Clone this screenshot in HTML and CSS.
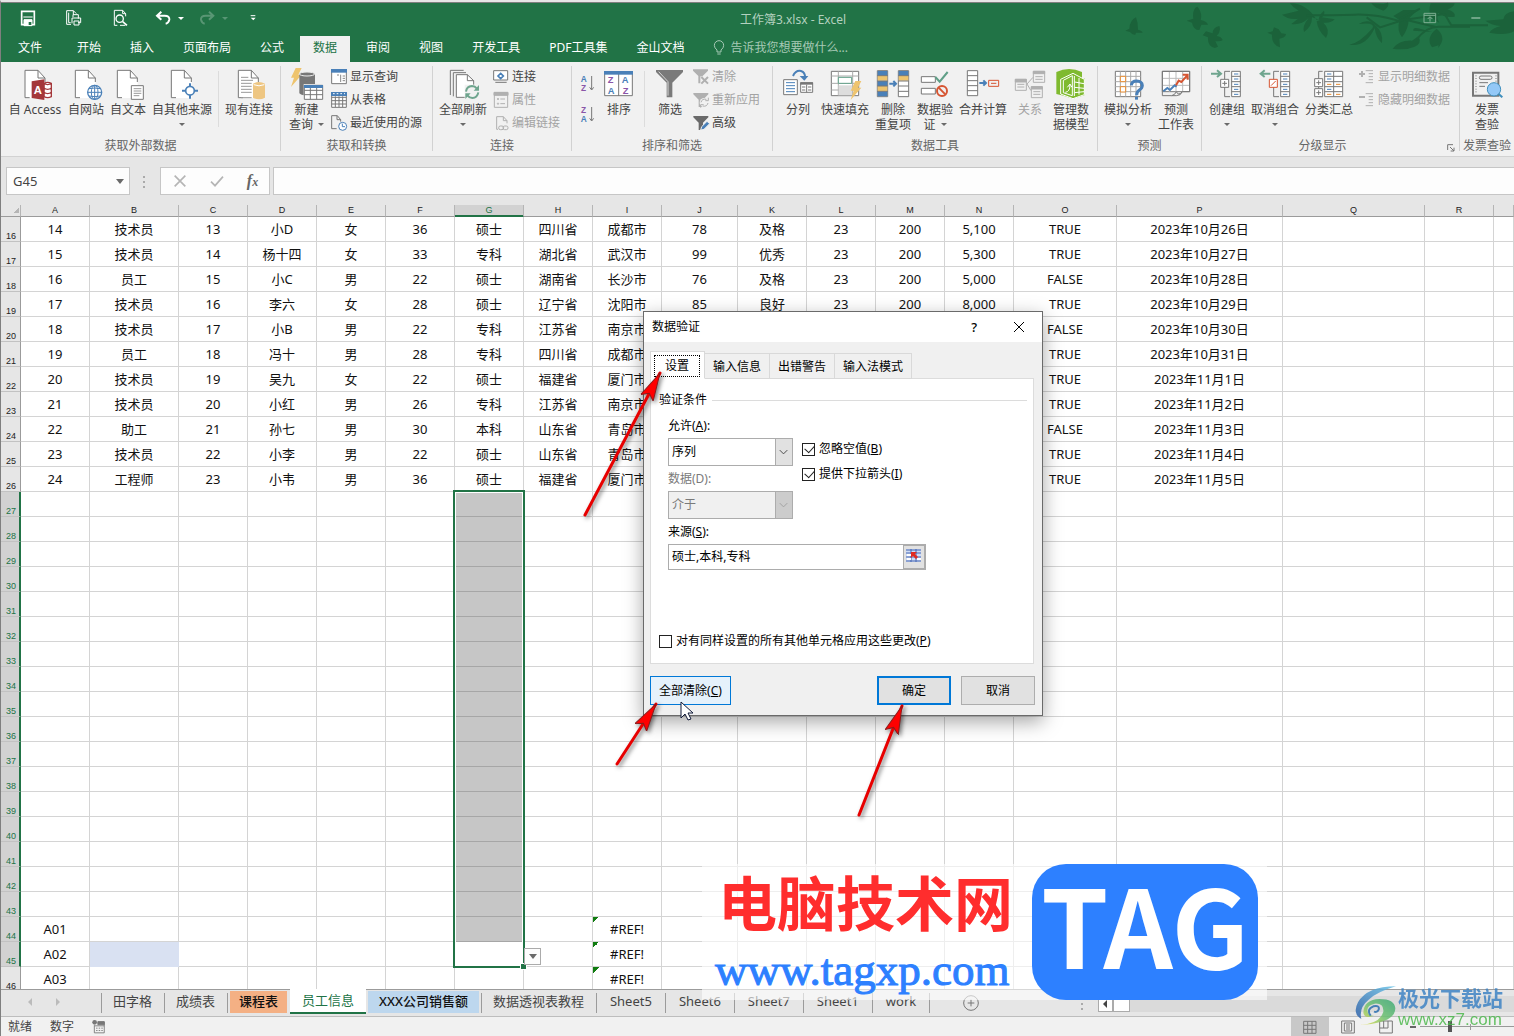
FILE: index.html
```html
<!DOCTYPE html>
<html lang="zh-CN">
<head>
    <meta charset="UTF-8" />
    <meta name="viewport" content="width=device-width, initial-scale=1" />
    <title>工作簿3.xlsx - Excel</title>
    <link rel="stylesheet" href="styles.css">
</head>
<body>
    <svg class="defs" width="0" height="0" aria-hidden="true">
        <symbol id="page" overflow="visible"><path d="M1 0h39l22 24v60H1z" fill="#fff" stroke="none"/><path d="M15 83H1V1h39l21 23v12M40 1v23h21" /></symbol>
        <symbol id="bolt" overflow="visible"><path d="M14 0h18L22 20h10L0 57l9-28H0z" fill="#eec46e" stroke="none"/></symbol>
        <symbol id="funnel" overflow="visible"><path d="M0 0h45v4L29 20v22H16V20L0 4z" stroke="none"/></symbol>
    </svg>

    <div class="window">
        <header class="titlebar">
            <svg class="foliage" viewBox="0 9 1182 177" aria-hidden="true">
                <path d="M48 52q-18 8-20 34l-12 6 14 4q8 10 16 8l2-6 20 0q-2-6-14-9 0-22-6-37zM232 20q-16 6-12 36l-20 6 16 6q4 22 22 22l6-16 20 0q-4-10-22-14 6-22-10-40zM298 78q-20 4-20 22l-20-6q-8 10-10 12l16 6q-2 26 20 32l10-4-8-16q20 0 22-4-4-10-18-12 14-14 8-30zM462 82l-4 12-16 4 14 6q-2 30 24 38l-2-26q18-2 20-14l-14-2-8-12z"/>
                <path d="M590 60Q560 10 510 10q10 14 26 22l-50 12q20 16 48 12l-20 16q30 4 52-18-20 24-14 42 24-16 24-44l24 8-10 4q4 30 28 50 14-26-8-46 24 2 34-10l-38-6q10-10 6-20-14 12-16 26zM716 72q50-6 42 12-40 46-70 50 50 8 76-50 4 30 22 46 4-34-18-52l-14-12q-20-6-38 6zM820 48l30-18h46q-20 14-30 26 0 30-20 56-16-20-8-52zM790 12l-36-2q10 14 36 22 20-14 14-24zM932 10h72q-2 12-22 18 26 8 22 22-30 4-50-12-6 16 4 30-40-16-26-58zM1182 34q-30 4-32 24l-54 4q20 14 46 16-26 6-34 20 50 10 74-4zM818 146q20-26 58-24l20-14q10 24-12 32-28 12-66 6zM950 86q-34 26-14 56l20-6-2 8q26-30 0-54zM900 86q-22-6-20 6l56 4z"/>
                <path class="twig" d="M560 46q80 0 144-2t130 18l140-20 20 34h110M740 52l40 30 70-22M890 118q30-40 70-38l90 0M840 56l60-30M860 60l90 22"/>
            </svg>
            <div class="quick">
                <button aria-label="保存"><svg class="ico w20" viewBox="54 24 60 60"><path d="M65 34h38v40H65z" stroke="#fff" stroke-width="5"/><path d="M70 51h28M72 59h24v18H72z" stroke="#fff" fill="#fff"/><path d="M86 66h8v9h-8z" fill="#217346" stroke="none"/></svg></button>
                <button aria-label="快速打印"><svg class="ico w20 light" viewBox="192 24 60 60"><path d="M213 73h-13V32h20l9 9M206 38v30h6M220 32v12M219 51v-7h16v12M216 70v-16h26v14h-8M222 63h15v12h-15z"/></svg></button>
                <button aria-label="打印预览"><svg class="ico w20 light" viewBox="330 24 60 60"><path d="M352 76h-9V31h25l9 10v8M368 31v10h9M360 76h16"/><circle cx="359" cy="56" r="11" stroke-width="4"/><path d="M368 65l13 11" stroke-width="5"/></svg></button>
                <button aria-label="撤消"><svg class="ico w20 light bold" viewBox="459 24 60 60"><path d="M484 35l-13 12 13 12M472 47h22q15 0 14 12-2 10-11 12"/></svg></button>
                <i class="caret"></i>
                <button class="dim" aria-label="恢复"><svg class="ico w20 light bold" viewBox="591 24 60 60"><path d="M627 35l13 12-13 12M639 47h-22q-15 0-14 12 2 10 11 12"/></svg></button>
                <i class="caret dim"></i>
                <button class="customize" aria-label="自定义快速访问工具栏"><svg class="ico w10 light" viewBox="746 39 30 30"><path d="M754 47h14"/><path d="M754 53h15l-7 8z" fill="#fff" stroke="none"/></svg></button>
            </div>
            <div class="caption">工作簿3.xlsx - Excel</div>
            <div class="winbuttons">
                <button aria-label="功能区显示选项"><svg class="ico w20" viewBox="902 24 60 60"><path d="M914 40h35v28h-35zM914 46h35M932 65v-14M925 57l7-7 7 7"/></svg></button>
                <button aria-label="最小化"><svg class="ico w20" viewBox="1040 30 60 60"><path d="M1056 60h27" stroke-width="5"/></svg></button>
            </div>
        </header>

        <nav class="tabs">
            <button class="file">文件</button>
            <button>开始</button>
            <button>插入</button>
            <button>页面布局</button>
            <button>公式</button>
            <button class="active">数据</button>
            <button>审阅</button>
            <button>视图</button>
            <button>开发工具</button>
            <button>PDF工具集</button>
            <button>金山文档</button>
            <button class="tellme"><svg class="ico" width="12" height="16" viewBox="849 123 36 48"><path d="M861 153q-8-6-8-14a13 13 0 0 1 28 0q0 8-8 14v6h-12zM862 165h10"/></svg>告诉我您想要做什么...</button>
        </nav>

        <div class="ribbon">
            <section class="group g-external">
                <div class="group-body">
                    <button class="big access"><svg class="ico w32" viewBox="55 204 96 96"><use href="#page" x="72" y="210"/><path d="M130 250v40q11 6 22 0v-40q-11-6-22 0zM130 250q11 8 22 0M130 264q11 8 22 0M130 277q11 8 22 0" fill="#fff" stroke="#a4373a" stroke-width="4"/><path d="M93 244l38-6v62l-38-6z" fill="#a4373a" stroke="none"/><text x="99" y="282">A</text></svg><span>自 Access</span></button>
                    <button class="big"><svg class="ico w32" viewBox="210 204 96 96"><use href="#page" x="225" y="210"/><g stroke="#4a80b8"><circle cx="284" cy="277" r="21" fill="#fff" stroke-width="4"/><ellipse cx="284" cy="277" rx="10" ry="21"/><path d="M284 256v42M263 277h42M267 266q17-4 34 0M267 288q17 4 34 0"/></g></svg><span>自网站</span></button>
                    <button class="big"><svg class="ico w32" viewBox="336 204 96 96"><use href="#page" x="351" y="210"/><path d="M394 257h36v41h-36z" fill="#fff"/><path d="M401 266h23M401 273h23M401 280h23M401 287h17" stroke="#999"/></svg><span>自文本</span></button>
                    <button class="big"><svg class="ico w32" viewBox="495 204 96 96"><use href="#page" x="510" y="210"/><path d="M567 250v46M543 272h48" stroke="#4a80b8" stroke-width="6"/><circle cx="567" cy="272" r="13" fill="#fff" stroke="#4a80b8" stroke-width="5"/></svg><span>自其他来源</span><i class="caret"></i></button>
                    <hr>
                    <button class="big"><svg class="ico w32" viewBox="699 204 96 96"><use href="#page" x="714" y="210"/><path d="M723 232h22M723 241h36M723 250h32M723 259h32M723 268h32M723 277h32M723 293h32" stroke="#999"/><path d="M759 251v42q18 10 36 0v-42q-18-10-36 0z" fill="#eec682" stroke="none"/><path d="M761 254q16 7 32 0" stroke="#fff"/></svg><span>现有连接</span></button>
                </div>
                <h2>获取外部数据</h2>
            </section>

            <section class="group g-transform">
                <div class="group-body">
                    <button class="big"><svg class="ico w32" viewBox="870 204 96 96"><use href="#bolt" x="870" y="204"/><path d="M895 222v58q4 5 13 6v-34h34v-30z" fill="#777" stroke="none"/><ellipse cx="918" cy="222" rx="23" ry="6" fill="#777" stroke="#eee"/><path d="M910 256h55v42h-55z" fill="#fff"/><path d="M910 271h55M910 284h55M928 262v36M947 262v36"/><path d="M909 255h57v9h-57z" fill="#4a80b8" stroke="none"/></svg><span>新建<br>查询<i class="caret"></i></span></button>
                    <div class="stack">
                        <button><svg class="ico w16" viewBox="990 204 48 48"><path d="M992 206h44v42h-44z" fill="#fff"/><path d="M990 204h48v11h-48z" fill="#4a80b8" stroke="none"/><path d="M1019 221v22M1025 225h7M1025 232h7M1025 239h7M1008 222h6" stroke="#888"/></svg>显示查询</button>
                        <button><svg class="ico w16" viewBox="990 273 48 48"><path d="M992 275h44v44h-44zM992 289h44M992 299h44M992 309h44M1003 286v32M1014 286v32M1025 286v32" fill="#fff"/><path d="M990 273h48v12h-48z" fill="#4a80b8" stroke="none"/><path d="M996 278h36" stroke="#fff" stroke-dasharray="5 6"/></svg>从表格</button>
                        <button><svg class="ico w16" viewBox="990 342 48 48"><path d="M1007 383h-15v-39h17l10 12v6M1008 344v12h11"/><circle cx="1025" cy="376" r="12" fill="#fff" stroke="#4a80b8"/><path d="M1024 368v9h8" stroke="#4a80b8"/></svg>最近使用的源</button>
                    </div>
                </div>
                <h2>获取和转换</h2>
            </section>

            <section class="group g-connect">
                <div class="group-body">
                    <button class="big"><svg class="ico w32" viewBox="51 204 96 96"><path d="M61 285v-74h40M70 289v-71h38"/><path d="M79 292v-68h33l19 18v50z" fill="#fff"/><path d="M112 224v18h19"/><path d="M104 254h46v46h-46z" fill="#f1f1f1" stroke="none"/><g class="bold"><path d="M108 275q2-16 18-17 9 0 14 7M145 277q-3 16-18 17-9 0-14-7" stroke="#6fa58e"/></g><path d="M147 255v17h-16zM106 297v-17h16z" fill="#6fa58e" stroke="none"/></svg><span>全部刷新</span><i class="caret"></i></button>
                    <div class="stack">
                        <button><svg class="ico w16" viewBox="189 204 48 48"><path d="M191 209h42v28h-42z" fill="#fff"/><path d="M196 244h34"/><path d="M212 217l8 8-8 8-8-8z" stroke="#4a80b8" stroke-width="5"/></svg>连接</button>
                        <button disabled><svg class="ico w16" viewBox="189 273 48 48"><path d="M193 275h40v44h-40z"/><path d="M192 274h42v9h-42z" fill="#b0b0b0"/><path d="M211 294h14M211 308h14"/><circle cx="204" cy="294" r="2"/><circle cx="204" cy="308" r="2"/></svg>属性</button>
                        <button disabled><svg class="ico w16" viewBox="189 342 48 48"><path d="M204 385h-4v-38h20l11 12v8M220 347v12h11"/><rect x="206" y="375" width="15" height="11" rx="5"/><rect x="219" y="375" width="15" height="11" rx="5"/></svg>编辑链接</button>
                    </div>
                </div>
                <h2>连接</h2>
            </section>

            <section class="group g-sort">
                <div class="group-body">
                    <div class="sorters">
                        <button aria-label="升序"><svg class="ico w16" viewBox="450 225 48 48"><text class="az blue" x="452" y="245">A</text><text class="az purple" x="453" y="273">Z</text><path d="M485 228v40M479 262l6 8 6-8"/></svg></button>
                        <button aria-label="降序"><svg class="ico w16" viewBox="450 318 48 48"><text class="az purple" x="453" y="338">Z</text><text class="az blue" x="452" y="366">A</text><path d="M485 321v40M479 355l6 8 6-8"/></svg></button>
                    </div>
                    <button class="big"><svg class="ico w32" viewBox="519 204 96 96"><path d="M524 215h83v72h-83zM566 222v66" fill="#fff"/><path d="M522 213h87v11h-87z" fill="#4a80b8" stroke="none"/><text class="az l purple" x="533" y="249">Z</text><text class="az l blue" x="533" y="281">A</text><text class="az l blue" x="575" y="249">A</text><text class="az l purple" x="578" y="281">Z</text></svg><span>排序</span></button>
                    <hr>
                    <button class="big"><svg class="ico w32" viewBox="672 204 96 96"><path d="M678 210h81v6l-32 32v44h-17v-44l-32-32z" fill="#7a7a7a" stroke="none"/><path d="M686 215l28 30v42" stroke="#d5d5d5"/></svg><span>筛选</span></button>
                    <div class="stack">
                        <button disabled><svg class="ico w16" viewBox="792 204 48 48"><use href="#funnel" x="792" y="205" fill="#b0b0b0"/><path d="M814 226h26v24h-26z" fill="#f1f1f1" stroke="none"/><path d="M817 228l20 20M837 228l-20 20" class="x"/></svg>清除</button>
                        <button disabled><svg class="ico w16" viewBox="792 273 48 48"><use href="#funnel" x="793" y="276" fill="#b0b0b0"/><circle cx="826" cy="305" r="14" fill="#f1f1f1" stroke="none"/><path d="M816 304q3-12 16-9M837 306q-3 12-16 9M838 290v9h-9M815 320v-9h9"/></svg>重新应用</button>
                        <button><svg class="ico w16" viewBox="792 342 48 48"><use href="#funnel" x="793" y="345" fill="#6a6a6a"/><path d="M815 387l3-10 16-16 8 7-17 17z" fill="#4a80b8" stroke="#f1f1f1"/></svg>高级</button>
                    </div>
                </div>
                <h2>排序和筛选</h2>
            </section>

            <section class="group g-tools">
                <div class="group-body">
                    <button class="big"><svg class="ico w32" viewBox="36 204 96 96"><g class="bold"><path d="M69 228q8-18 24-15 13 4 12 20" stroke="#4a80b8"/></g><path d="M89 228h26l-12 14z" fill="#4a80b8" stroke="none"/><path d="M41 239h41v45H41z" fill="#fff"/><path d="M48 248h27M48 257h27M48 266h27M48 275h27" stroke="#4a80b8"/><path d="M92 248h36v29H92z" fill="#fff"/><path d="M91 247h38v7H91z" fill="#777" stroke="none"/><path d="M110 254v23M96 261h10M96 270h10M114 261h10M114 270h10"/></svg><span>分列</span></button>
                    <button class="big"><svg class="ico w32" viewBox="177 204 96 96"><path d="M184 214h82v73h-82z" fill="#fff"/><path d="M184 228h82M184 250h82M184 270h82M205 214v73M248 214v73" stroke="#aaa"/><path d="M206 256h40v30h-40z" fill="#ddd" stroke="none"/><path d="M205 232h40v18h-40z" fill="#fff" stroke="#5f9f87"/><use href="#bolt" x="242" y="243"/></svg><span>快速填充</span></button>
                    <button class="big"><svg class="ico w32" viewBox="321 204 96 96"><path d="M322 212h31v78h-31zM385 212h31v78h-31z" fill="#fff"/><path d="M323 213h29v14h-29zM323 243h29v15h-29zM323 274h29v15h-29zM386 213h29v14h-29z" fill="#4a80b8" stroke="none"/><path d="M323 228h29v14h-29zM323 258h29v15h-29zM386 228h29v14h-29z" fill="#eec46e" stroke="none"/><path d="M322 227h31M322 243h31M322 258h31M322 274h31M385 227h31M385 243h31M385 258h31M385 274h31"/><g class="bold"><path d="M358 251h20M370 243l8 8-8 8" stroke="#4a80b8"/></g></svg><span>删除<br>重复项</span></button>
                    <button class="big"><svg class="ico w32" viewBox="447 204 96 96"><path d="M454 230h42v17h-42zM454 265h42v17h-42z" fill="#fff"/><g class="bold"><path d="M496 231l13 14 24-29" stroke="#5f9f87"/><circle cx="516" cy="273" r="15" stroke="#d65532"/><path d="M506 263l20 20" stroke="#d65532"/></g></svg><span>数据验<br>证<i class="caret"></i></span></button>
                    <button class="big"><svg class="ico w32" viewBox="588 204 96 96"><path d="M589 212h31v75h-31zM589 227h31M589 242h31M589 257h31M589 272h31" fill="#fff"/><g class="bold"><path d="M625 249h20M637 241l8 8-8 8" stroke="#4a80b8"/></g><path d="M653 241h30v18h-30zM660 250h16" stroke="#d65532"/></svg><span>合并计算</span></button>
                    <button class="big" disabled><svg class="ico w32" viewBox="732 204 96 96"><path d="M736 238h33v33h-33zM790 214h34v33h-34zM784 260h33v33h-33zM771 252l18-20M771 252l12 20M742 253h21M742 261h21M796 230h22M796 238h22M790 275h21M790 283h21"/><path d="M736 238h33v8h-33zM790 214h34v7h-34zM784 260h33v7h-33z" fill="#b0b0b0"/></svg><span>关系</span></button>
                    <button class="big"><svg class="ico w32" viewBox="857 204 96 96"><path d="M861 216q38-18 77 0v30l7-12v52l-34 10-34-10-16-4z" fill="#7fba2f" stroke="none"/><path d="M874 238l37-18 34 18v46l-34 12-37-14z" fill="#7fba2f" stroke="#fff"/><path d="M882 241l27-14v60l-27-9z" stroke="#fff"/><path d="M915 228v60M929 234v50M916 246l28 5M916 262l28 3M916 278l28-3" stroke="#fff"/><path d="M888 277q14-2 14-22M894 262l8-10 6 10" stroke="#fff"/></svg><span>管理数<br>据模型</span></button>
                </div>
                <h2>数据工具</h2>
            </section>

            <section class="group g-forecast">
                <div class="group-body">
                    <button class="big"><svg class="ico w32" viewBox="1026 204 96 96"><path d="M1036 214h76v76h-76z" fill="#fff"/><path d="M1036 229h76M1036 245h76M1036 260h76M1036 275h76M1051 214v76M1067 214v76M1082 214v76M1098 214v76" stroke="#aaa"/><path d="M1051 229h16v16h-16zM1051 260h16v16h-16z" fill="#fff" stroke="#e58a2e"/><g class="heavy"><path d="M1084 256q1-13 16-13 16 1 17 13 0 9-9 14-8 5-8 16" stroke="#4a80b8"/></g><path d="M1095 290h9v9h-9z" fill="#4a80b8" stroke="none"/></svg><span>模拟分析</span><i class="caret"></i></button>
                    <button class="big"><svg class="ico w32" viewBox="120 204 96 96"><path d="M127 214h82v61h-82z" fill="#fff"/><path d="M127 235h82M127 256h82M148 214v61M168 214v61M188 214v61" stroke="#bbb"/><path d="M127 275v12h28q10-2 14-12 6 14 18 0M155 287h14q14 0 18-12h22v-61h-82v61"/><g class="bold"><path d="M130 274l12-10 8 6 14-14 6 4" stroke="#4a80b8"/><path d="M168 256l8-14 8 4 18-20M188 224h15v15" stroke="#d65532"/></g></svg><span>预测<br>工作表</span></button>
                </div>
                <h2>预测</h2>
            </section>

            <section class="group g-outline">
                <div class="group-body">
                    <button class="big"><svg class="ico w32" viewBox="273 204 96 96"><g class="bold"><path d="M273 221h28M291 211l12 10-12 10" stroke="#6fa58e"/></g><path d="M330 214h-16v76h16"/><path d="M335 214h26v76h-26zM335 229h26M335 245h26M335 260h26M335 275h26" fill="#fff"/><path d="M342 222h13M342 237h13M342 253h13M342 268h13M342 283h13" stroke="#4a80b8"/><path d="M302 238h24v24h-24zM307 250h14M314 243v14" fill="#fff"/></svg><span>创建组</span><i class="caret"></i></button>
                    <button class="big"><svg class="ico w32" viewBox="414 204 96 96"><g class="bold"><path d="M420 221h28M431 211l-12 10 12 10" stroke="#6fa58e"/></g><path d="M474 214h-16v76h16"/><path d="M479 214h27v76h-27zM479 229h27M479 245h27M479 260h27M479 275h27" fill="#fff"/><path d="M486 222h13M486 237h13M486 253h13M486 268h13M486 283h13" stroke="#4a80b8"/><path d="M445 238h24v24h-24zM450 257l14-14" fill="#fff" stroke="#d65532"/></svg><span>取消组合</span><i class="caret"></i></button>
                    <button class="big"><svg class="ico w32" viewBox="573 204 96 96"><path d="M602 214h-12v76h12"/><path d="M608 214h54v76h-54zM635 214v76M608 229h54M608 245h54M608 260h54M608 275h54" fill="#fff"/><path d="M615 222h13M615 237h13M615 268h13" stroke="#4a80b8"/><path d="M615 253h13M642 253h13M615 283h13M642 283h13" stroke="#e58a2e"/><path d="M578 236h24v24h-24zM583 248h14M590 241v14M578 266h24v24h-24zM583 278h14M590 271v14" fill="#fff"/></svg><span>分类汇总</span></button>
                    <div class="stack">
                        <button disabled><svg class="ico w16" viewBox="714 204 48 48"><g class="bold"><path d="M714 219h18M723 210v18"/></g><path d="M734 209h22M743 218h13M743 227h13M743 236h13M734 245h22"/></svg>显示明细数据</button>
                        <button disabled><svg class="ico w16" viewBox="714 273 48 48"><g class="bold"><path d="M714 288h18"/></g><path d="M734 278h22M743 287h13M743 296h13M743 305h13M734 314h22"/></svg>隐藏明细数据</button>
                    </div>
                </div>
                <h2>分级显示</h2>
                <button class="launcher" aria-label="分级显示设置"><svg class="ico w8" viewBox="983 434 24 24"><path d="M985 452v-16h16M992 443l12 12M1004 445v10h-10"/></svg></button>
            </section>

            <section class="group g-invoice">
                <div class="group-body">
                    <button class="big"><svg class="ico w32" viewBox="1053 204 96 96"><g class="bold"><path d="M1059 218h76v69h-76z"/></g><path d="M1068 226v56M1128 226v20" stroke-dasharray="3 5"/><rect x="1078" y="228" width="38" height="10" rx="5"/><path d="M1078 248h26M1078 259h17"/><circle cx="1122" cy="268" r="20" fill="#93c8f7" stroke="#3f8fbd"/><g class="bold"><path d="M1136 282l11 10" stroke="#3f8fbd"/></g></svg><span>发票<br>查验</span></button>
                </div>
                <h2>发票查验</h2>
            </section>
        </div>

        <div class="formula">
            <label class="namebox"><input type="text" value="G45" aria-label="名称框"><i class="caret"></i></label>
            <span class="grip"></span>
            <div class="fx">
                <button aria-label="取消"><svg class="ico w16 grey" viewBox="0 0 48 48"><path d="M8 8l32 32M40 8L8 40"/></svg></button>
                <button aria-label="输入"><svg class="ico w16 grey" viewBox="0 0 48 48"><path d="M6 26l12 12 24-27"/></svg></button>
                <button class="fn" aria-label="插入函数">f<small>x</small></button>
            </div>
            <input class="expr" type="text" aria-label="编辑栏">
        </div>

        <main class="sheet">
            <table>
                <colgroup id="cols"></colgroup>
                <thead><tr id="letters"></tr></thead>
                <tbody id="cells"></tbody>
            </table>
            <div class="range"></div>
            <button class="pick" aria-label="选择"><i class="caret"></i></button>
        </main>

        <div class="sheets">
            <div class="nav"><button aria-label="上一张"><i class="tri left"></i></button><button aria-label="下一张"><i class="tri right"></i></button></div>
            <button>田字格</button>
            <button>成绩表</button>
            <button class="orange">课程表</button>
            <button class="active">员工信息</button>
            <button class="blue">XXX公司销售额</button>
            <button>数据透视表教程</button>
            <button class="wide">Sheet5</button>
            <button class="wide">Sheet6</button>
            <button class="wide">Sheet7</button>
            <button class="wide">Sheet1</button>
            <button class="wide">work</button>
            <button class="add" aria-label="新工作表"><svg class="ico w16" viewBox="0 0 48 48"><circle cx="24" cy="24" r="22"/><path d="M14 24h20M24 14v20"/></svg></button>
            <span class="grip"></span>
            <div class="scroll"><button aria-label="向左滚动"><i class="tri left"></i></button><span></span></div>
        </div>

        <footer class="status">
            <span>就绪</span>
            <span>数字</span>
            <svg class="ico w14" viewBox="0 0 48 48"><path d="M8 18v26h34V6H20M8 20h34M20 12h22" /><path d="M20 6h22v10H20z" fill="#777"/><circle cx="9" cy="8" r="8" fill="#777" stroke="none"/><path d="M14 28h24M14 36h24" stroke-dasharray="5 4"/></svg>
            <div class="views">
                <button class="on" aria-label="普通"><svg class="ico w14" viewBox="0 0 42 42"><path d="M2 4h37v36H2zM2 16h37M2 28h37M14 4v36M27 4v36"/></svg></button>
                <button aria-label="页面布局视图"><svg class="ico w14" viewBox="0 0 42 42"><path d="M2 3h38v36H2zM10 9h22v24H10zM15 15h12M15 21h12M15 27h12"/></svg></button>
                <button aria-label="分页预览"><svg class="ico w14" viewBox="0 0 42 42"><path d="M2 3h38v36H2zM2 24h25V3M14 3v21"/></svg></button>
            </div>
            <button class="minus" aria-label="缩小"></button>
            <input class="zoom" type="range" min="0" max="100" value="29" aria-label="缩放">
        </footer>
    </div>

    <div class="dialog" role="dialog" aria-labelledby="dlgTitle">
        <div class="dlg-head">
            <span id="dlgTitle">数据验证</span>
            <button aria-label="帮助">?</button>
            <button aria-label="关闭"><svg width="12" height="12" viewBox="0 0 12 12"><path d="M1 1l10 10M11 1L1 11" stroke="#000"/></svg></button>
        </div>
        <div class="dlg-tabs">
            <button class="active"><span>设置</span></button>
            <button>输入信息</button>
            <button>出错警告</button>
            <button>输入法模式</button>
        </div>
        <div class="dlg-panel">
            <div class="legend">验证条件</div>
            <div class="fields">
                <div class="col">
                    <label for="allow">允许(<u>A</u>):</label>
                    <div class="combo"><select id="allow"><option>序列</option></select><svg width="17" height="26" viewBox="0 0 17 26"><path d="M4 11l4 4 4-4" /></svg></div>
                    <label class="off" for="data">数据(D):</label>
                    <div class="combo off"><select id="data" disabled><option>介于</option></select><svg width="17" height="26" viewBox="0 0 17 26"><path d="M4 11l4 4 4-4" /></svg></div>
                </div>
                <div class="checks">
                    <label><input type="checkbox" checked><span>忽略空值(<u>B</u>)</span></label>
                    <label><input type="checkbox" checked><span>提供下拉箭头(<u>I</u>)</span></label>
                </div>
            </div>
            <div class="source">
                <label for="source">来源(<u>S</u>):</label>
                <div class="ref">
                    <input id="source" type="text" value="硕士,本科,专科">
                    <button aria-label="折叠对话框"><svg width="16" height="14" viewBox="0 0 16 14"><path d="M0 0h15v13H0z" fill="#cfdcf5"/><path d="M0 1h15M0 4h15M0 8h15M0 12h15M5 0v13M10 0v13" stroke="#4565b0"/><path d="M1 5h4v2H1zM1 9h4v2H1zM11 9h4v2h-4z" fill="#fff"/><path d="M5 3l6 0-2 2 3 3-2 2-3-3-2 2z" fill="#e02b20"/></svg></button>
                </div>
            </div>
            <label class="apply"><input type="checkbox"><span>对有同样设置的所有其他单元格应用这些更改(<u>P</u>)</span></label>
        </div>
        <div class="dlg-foot">
            <button class="clear">全部清除(<u>C</u>)</button>
            <button class="ok">确定</button>
            <button>取消</button>
        </div>
    </div>

    <svg class="arrows" width="1514" height="1036" aria-hidden="true">
        <defs>
            <marker id="head" markerUnits="userSpaceOnUse" markerWidth="32" markerHeight="20" refX="28" refY="9" orient="auto"><path d="M0 2l28 7-28 7 5-7z" fill="#f00" stroke="#8c1a1a" stroke-width="1"/></marker>
        </defs>
        <g class="shafts">
            <path d="M585 515L660 373" marker-end="url(#head)"/>
            <path d="M617 764L656 704" marker-end="url(#head)"/>
            <path d="M859 815L902 706" marker-end="url(#head)"/>
        </g>
        <path d="M681 702v16l4-4 3 6 3-1-3-6h5z" fill="#fff" stroke="#111a3a"/>
    </svg>

    <div class="mark-tag">
        <div class="mark-text">
            <strong>电脑技术网</strong>
            <span>www.tagxp.com</span>
        </div>
        <b>TAG</b>
    </div>

    <div class="mark-site">
        <svg width="44" height="42" viewBox="0 0 132 126">
            <defs>
                <linearGradient id="swA" x1="0" y1="1" x2="1" y2="0"><stop offset="0" stop-color="#2c5fa8"/><stop offset="1" stop-color="#6bc4e8"/></linearGradient>
                <linearGradient id="swB" x1="0" y1="1" x2="1" y2="0"><stop offset="0" stop-color="#f0e04a"/><stop offset="50%" stop-color="#6cc070"/><stop offset="1" stop-color="#3aa878"/></linearGradient>
            </defs>
            <path d="M126 4Q40 4 12 52q-18 34 10 50-8-34 22-58Q70 20 126 4z" fill="url(#swA)"/>
            <path d="M18 120q60-4 70-40 2-26-26-24-22 4-22 20 2 18 20 16-30 12-32-10Q30 44 76 42q46 0 48 28 0 44-106 50z" fill="url(#swB)"/>
            <path d="M50 92q-14-18 8-28 20-4 16 10-4 10-14 6" fill="none" stroke="#2c6fb0" stroke-width="6"/>
        </svg>
        <div><strong>极光下载站</strong><span>www.xz7.com</span></div>
    </div>

    <script src="sheet.js"></script>
</body>
</html>
```
FILE: styles.css
```css
* {
    box-sizing: border-box;
}
body {
    margin: 0;
    position: relative;
    overflow: hidden;
    background-color: #e6e6e6;
    font-family: "Noto Sans", "Noto Sans CJK SC", sans-serif;
    font-size: 12px;
    line-height: 16px;
    color: #444;
}
button, input, select {
    font: inherit;
    color: inherit;
    margin: 0;
    padding: 0;
    border: 0;
    background: none;
}
button {
    white-space: nowrap;
}
svg {
    display: block;
    flex: none;
    overflow: visible;
}
.defs {
    position: absolute;
}
.window {
    display: flex;
    flex-direction: column;
    height: 100vh;
    border-left: 1px solid #7f7f7f;
    border-top: 2px solid #e6e6e6;
}

/* icons */
.ico {
    fill: none;
    stroke: #777;
    stroke-width: 3px;
}
.ico .bold, .ico.bold, .ico .x {
    stroke-width: 6px;
}
.ico .heavy {
    stroke-width: 9px;
}
.ico text {
    fill: #fff;
    stroke: none;
    font: bold 34px "Liberation Sans", sans-serif;
}
.ico text.az {
    font-size: 25px;
}
.ico text.l {
    font-size: 28px;
}
.ico text.blue {
    fill: #4a80b8;
}
.ico text.purple {
    fill: #8a55a8;
}
.light {
    stroke: #fff;
}
.grey {
    stroke: #b5b5b5;
    stroke-width: 5px;
}
.w8 { width: 8px; height: 8px; }
.w10 { width: 10px; height: 10px; }
.w14 { width: 14px; height: 14px; }
.w16 { width: 16px; height: 16px; }
.w20 { width: 20px; height: 20px; }
.w32 { width: 32px; height: 32px; }
.caret {
    display: inline-block;
    flex: none;
    width: 0;
    height: 0;
    border: 3px solid transparent;
    border-top-color: #6a6a6a;
    border-bottom-width: 0;
}
.tri {
    display: block;
    width: 0;
    height: 0;
    border: 4px solid transparent;
}
.tri.left {
    border-left-width: 0;
    border-right-color: currentColor;
}
.tri.right {
    border-right-width: 0;
    border-left-color: currentColor;
}
.dim {
    opacity: 0.25;
}

/* title bar */
.titlebar {
    position: relative;
    isolation: isolate;
    display: flex;
    height: 34px;
    border-top: 1px solid #7f7f7f;
    background-color: #217346;
    color: #b3d1bf;
}
.foliage {
    position: absolute;
    z-index: -1;
    right: 0;
    top: 0;
    width: 394px;
    height: 59px;
    fill: #1b623a;
}
.twig {
    fill: none;
    stroke: #1b623a;
    stroke-width: 6px;
}
.quick {
    display: flex;
    align-items: center;
    flex: 1 1 0;
    height: 30px;
    padding-left: 17px;
}
.quick button {
    margin-right: 26px;
}
.quick button:nth-of-type(n+3) {
    margin-right: 23px;
}
.quick button:nth-of-type(n+4) {
    margin-right: 5px;
}
.quick .caret {
    border-top-color: #fff;
    margin-right: 13px;
}
.quick .caret.dim {
    margin-right: 20px;
}
.caption {
    padding: 9px 0;
    margin-left: 82px;
}
.winbuttons {
    display: flex;
    align-items: flex-start;
    justify-content: flex-end;
    flex: 1 1 0;
    gap: 26px;
    padding: 5px 28px 0 0;
}
.winbuttons .ico {
    stroke: #7fb093;
}

/* ribbon tabs */
.tabs {
    display: flex;
    flex-shrink: 0;
    gap: 1px;
    height: 26px;
    background-color: #217346;
    color: #fff;
}
.tabs button {
    padding: 0 14px 2px;
}
.tabs .file {
    padding: 0 17px 2px;
    margin-right: 3px;
}
.tabs .active {
    padding: 0 13px 2px;
    margin: 0 1px;
    background-color: #f1f1f1;
    color: #217346;
}
.tabs .tellme {
    display: flex;
    align-items: center;
    gap: 5px;
    color: #a6c9b5;
}
.tellme .ico {
    stroke: #a6c9b5;
}

/* ribbon */
.ribbon {
    display: flex;
    height: 95px;
    padding: 4px 0 5px;
    background-color: #f1f1f1;
    border-bottom: 1px solid #d2d2d2;
}
.group {
    position: relative;
    flex: none;
    display: flex;
    flex-direction: column;
    border-right: 1px solid #d2d2d2;
}
.g-external { min-width: 280px; }
.g-transform { min-width: 152px; }
.g-connect { min-width: 139px; }
.g-sort { min-width: 201px; }
.g-tools { min-width: 325px; }
.g-forecast { min-width: 104px; }
.g-outline { min-width: 258px; }
.group.g-invoice {
    flex: 1;
    border-right: 0;
}
.group-body {
    display: flex;
    flex: 1;
    padding: 2px 0 0 4px;
}
.g-connect .group-body, .g-forecast .group-body {
    padding-left: 3px;
}
.g-tools .group-body {
    padding-left: 5px;
}
.g-invoice .group-body {
    justify-content: center;
    padding-left: 0;
}
.group-body hr {
    width: 1px;
    height: 56px;
    margin: 3px 3px 0;
    border: 0;
    background-color: #dcdcdc;
}
.g-sort hr {
    margin: 3px 5px 0;
}
.group h2 {
    margin: 0 0 -1px;
    font-size: 12px;
    line-height: 12px;
    font-weight: normal;
    text-align: center;
    color: #666;
}
.g-outline h2 {
    padding-right: 16px;
}
.big {
    display: flex;
    flex-direction: column;
    align-items: center;
    min-width: 40px;
    padding: 0 3px;
    line-height: 15px;
}
.big.access {
    min-width: 60px;
}
.g-transform .big {
    min-width: 43px;
}
.big span {
    margin-top: 2px;
}
.big > .caret {
    margin-top: 6px;
}
.big span .caret {
    margin: 0 0 3px 5px;
}
.stack {
    display: flex;
    flex-direction: column;
    padding-left: 3px;
}
.stack button {
    display: flex;
    align-items: center;
    gap: 3px;
    height: 23px;
    padding-bottom: 6px;
}
button:disabled {
    color: #a3a3a3;
}
button:disabled .ico {
    stroke: #b0b0b0;
}
.sorters {
    display: flex;
    flex-direction: column;
    gap: 15px;
    padding: 7px 3px 0 4px;
}
.launcher {
    position: absolute;
    right: 4px;
    bottom: -1px;
}

/* formula bar */
.formula {
    display: flex;
    height: 48px;
    padding: 10px 0 10px 5px;
    font-size: 13px;
}
.namebox, .fx, .expr {
    background-color: #fdfdfd;
    border: 1px solid #c6c6c6;
}
.namebox {
    display: flex;
    align-items: center;
    width: 124px;
    padding: 0 5px 0 6px;
}
.namebox input {
    flex: 1;
    min-width: 0;
}
.namebox .caret, .pick .caret {
    border-width: 5px 4px 0;
}
.grip {
    width: 3px;
    height: 12px;
    margin: 9px 14px 0 13px;
    background-image: linear-gradient(#aaa 2px, transparent 2px);
    background-size: 2px 5px;
    background-repeat: repeat-y;
}
.fx {
    display: flex;
    align-items: center;
    justify-content: space-around;
    width: 110px;
    margin-right: 3px;
}
.fn {
    font: italic bold 16px "Liberation Serif", serif;
    color: #666;
}
.fn small {
    font-size: 12px;
}
.expr {
    flex: 1;
    border-right: 0;
}

/* sheet */
.sheet {
    position: relative;
    flex: 1 1 0;
    overflow: hidden;
    background-color: #fff;
}
table {
    width: 100%;
    table-layout: fixed;
    border-collapse: separate;
    border-spacing: 0;
}
th {
    padding: 0;
    border-right: 1px solid #9b9b9b;
    font-family: "Liberation Sans", sans-serif;
    font-size: 9px;
    line-height: 11px;
    font-weight: normal;
    color: #222;
    background-color: #e6e6e6;
}
thead th {
    height: 12px;
    border-right-color: #b5b5b5;
    border-bottom: 1px solid #9b9b9b;
}
thead th.corner {
    background-image: linear-gradient(135deg, transparent 50%, #b5b5b5 50%);
    background-size: 6px 5px;
    background-position: 12px 3px;
    background-repeat: no-repeat;
}
thead th.on {
    background-color: #d2d2d2;
    color: #217346;
    border-bottom-color: #217346;
    box-shadow: inset 0 -1px #217346;
}
tbody th {
    vertical-align: bottom;
    text-align: right;
    padding-right: 4px;
    border-bottom: 1px solid #c2c2c2;
    line-height: 9px;
}
tbody th.on {
    color: #217346;
    background-color: #d2d2d2;
    border-right: 2px solid #217346;
    padding-right: 3px;
}
td {
    height: 25px;
    padding: 0;
    border-right: 1px solid #d4d4d4;
    border-bottom: 1px solid #d4d4d4;
    font-size: 13px;
    line-height: 20px;
    text-align: center;
    white-space: nowrap;
    color: #111;
}
td.sel {
    background-color: #c6c6c6;
    border-bottom-color: #a6a6a6;
}
td.tint {
    background-color: #d9e1f2;
    border-color: #d9e1f2;
}
td.err {
    background-image: linear-gradient(135deg, #107c10 50%, transparent 50%);
    background-size: 6px 6px;
    background-repeat: no-repeat;
}
.range {
    position: absolute;
    left: 452px;
    top: 285px;
    width: 72px;
    height: 478px;
    border: 2px solid #217346;
    box-shadow: inset 0 0 0 1px #fff;
}
.range::after {
    content: "";
    position: absolute;
    right: -3px;
    bottom: -3px;
    width: 5px;
    height: 5px;
    background-color: #217346;
    outline: 1px solid #fff;
}
.pick {
    position: absolute;
    left: 523px;
    top: 743px;
    width: 17px;
    height: 17px;
    display: flex;
    align-items: center;
    justify-content: center;
    background-color: #fdfdfd;
    border: 1px solid #ababab;
}

/* sheet tabs */
.sheets {
    display: flex;
    align-items: flex-start;
    height: 28px;
    border-top: 1px solid #9b9b9b;
    border-bottom: 1px solid #bdbdbd;
}
.sheets > button {
    height: 20px;
    margin-top: 3px;
    padding: 0 12px 4px 11px;
    border-right: 1px solid #9b9b9b;
    font-size: 13px;
}
.sheets > .wide {
    padding: 0 13px 4px;
}
.sheets .nav {
    display: flex;
    align-items: center;
    gap: 24px;
    width: 101px;
    height: 20px;
    margin-top: 3px;
    padding: 0 0 2px 27px;
    border-right: 1px solid #9b9b9b;
    color: #bbb;
}
.sheets > .orange, .sheets > .blue {
    height: 22px;
    margin: 1px 2px 0;
    padding: 0 9px 2px;
    border: 0;
    font-weight: 500;
    color: #111;
}
.sheets > .orange {
    background-color: #f4b084;
}
.sheets > .blue {
    padding: 0 11px 2px;
    background-color: #bdd7ee;
}
.sheets > .blue + button {
    border-left: 1px solid #9b9b9b;
}
.sheets > .active {
    height: 25px;
    margin: -1px 0 0 1px;
    padding: 0 12px 1px;
    border: 0;
    border-bottom: 2px solid #217346;
    background-color: #fff;
    color: #217346;
}
.sheets > .add {
    height: 16px;
    margin: 5px 0 0 33px;
    padding: 0;
    border: 0;
}
.sheets .grip {
    margin: 8px 14px 0 auto;
}
.scroll {
    display: flex;
    width: 416px;
    margin-top: 6px;
    height: 16px;
    background-color: #dadada;
}
.scroll button, .scroll span {
    width: 15px;
    background-color: #fff;
    border: 1px solid #ababab;
}
.scroll button {
    padding-left: 4px;
}
.scroll span {
    width: 17px;
}

/* status bar */
.status {
    display: flex;
    align-items: center;
    gap: 18px;
    height: 19px;
    padding-left: 7px;
    background-color: #f1f1f1;
}
.views {
    display: flex;
    margin-left: auto;
}
.views button {
    display: flex;
    justify-content: center;
    align-items: center;
    width: 38px;
    height: 19px;
}
.views .on {
    background-color: #c8c8c8;
}
.minus {
    width: 6px;
    height: 2px;
    margin-left: -13px;
    background-color: #666;
}
.zoom {
    -webkit-appearance: none;
    appearance: none;
    width: 100px;
    height: 12px;
    margin: 0 -6px 0 -14px;
    background-image: linear-gradient(#999, #999), linear-gradient(#999, #999);
    background-size: 100% 1px, 1px 6px;
    background-position: center;
    background-repeat: no-repeat;
}
.zoom::-webkit-slider-thumb {
    -webkit-appearance: none;
    width: 4px;
    height: 11px;
    background-color: #555;
}

/* data validation dialog */
.dialog {
    position: absolute;
    left: 643px;
    top: 311px;
    width: 400px;
    border: 1px solid #6a6a6a;
    background-color: #f0f0f0;
    box-shadow: 0 6px 18px rgba(0, 0, 0, 0.35);
    color: #000;
}
.dlg-head {
    display: flex;
    align-items: center;
    height: 30px;
    padding: 0 17px 0 8px;
    background-color: #fff;
}
.dlg-head span {
    flex: 1;
}
.dlg-head button:first-of-type {
    margin-right: 36px;
    font-size: 13px;
    font-weight: 500;
}
.dlg-tabs {
    position: relative;
    display: flex;
    align-items: flex-end;
    padding: 9px 0 0 6px;
    margin-bottom: -1px;
}
.dlg-tabs button {
    height: 26px;
    padding: 2px 8px 0;
    border: 1px solid #d9d9d9;
    border-left: 0;
}
.dlg-tabs .active {
    height: 28px;
    padding: 3px 4px 2px 3px;
    border-left: 1px solid #d9d9d9;
    border-bottom-color: #fff;
    background-color: #fff;
}
.dlg-tabs .active span {
    display: block;
    padding: 2px 10px;
    border: 1px dotted #000;
}
.dlg-panel {
    height: 286px;
    margin: 0 8px 0 6px;
    padding: 13px 6px 0 8px;
    background-color: #fff;
    border: 1px solid #dcdcdc;
}
.legend {
    display: flex;
    align-items: center;
    gap: 5px;
}
.legend::after {
    content: "";
    flex: 1;
    height: 1px;
    background-color: #dcdcdc;
}
.fields {
    display: flex;
    gap: 9px;
    padding: 10px 0 0 9px;
}
.col {
    display: flex;
    flex-direction: column;
    width: 125px;
}
.combo {
    display: flex;
    height: 28px;
    margin: 4px 0 5px;
    border: 1px solid #acacac;
}
.combo select {
    -webkit-appearance: none;
    appearance: none;
    flex: 1;
    padding-left: 3px;
    opacity: 1;
}
.combo svg {
    background-color: #e1e1e1;
    border-left: 1px solid #acacac;
    fill: none;
    stroke: #444;
}
.off {
    color: #7a7a7a;
}
.combo.off {
    background-color: #f0f0f0;
}
.combo.off svg {
    background-color: #ccc;
    stroke: #a0a0a0;
}
.checks {
    display: flex;
    flex-direction: column;
    gap: 9px;
    padding-top: 23px;
}
.checks label, .apply {
    display: flex;
    align-items: center;
    gap: 4px;
}
input[type="checkbox"] {
    -webkit-appearance: none;
    appearance: none;
    position: relative;
    width: 13px;
    height: 13px;
    border: 1px solid #222;
    background-color: #fff;
}
input[type="checkbox"]:checked::after {
    content: "";
    position: absolute;
    left: 2px;
    top: 1px;
    width: 8px;
    height: 5px;
    border: solid #222;
    border-width: 0 0 1px 1px;
    transform: rotate(-48deg);
}
.source {
    padding-left: 9px;
}
.ref {
    display: flex;
    width: 258px;
    height: 26px;
    margin-top: 4px;
    border: 1px solid #acacac;
}
.ref input {
    flex: 1;
    min-width: 0;
    padding-left: 3px;
}
.ref button {
    display: flex;
    justify-content: center;
    width: 22px;
    padding-top: 3px;
    background-color: #e1e1e1;
    border: 1px solid #acacac;
}
.apply {
    margin-top: 63px;
}
.dlg-foot {
    display: flex;
    padding: 12px 7px 10px 6px;
}
.dlg-foot button {
    width: 74px;
    height: 29px;
    border: 1px solid #adadad;
    background-color: #e1e1e1;
}
.dlg-foot .clear {
    width: 81px;
    margin-right: auto;
    border-color: #0078d7;
    background-color: #e5f1fb;
}
.dlg-foot .ok {
    margin-right: 10px;
    border: 2px solid #0078d7;
}

/* arrows and pointer over the window */
.arrows {
    position: absolute;
    left: 0;
    top: 0;
    pointer-events: none;
}
.shafts {
    fill: none;
    stroke: #e80000;
    stroke-width: 3px;
    stroke-linecap: round;
    filter: drop-shadow(2px 2px 2px rgba(0, 0, 0, 0.5));
}

/* watermarks */
.mark-tag {
    position: absolute;
    left: 702px;
    top: 864px;
    display: flex;
    justify-content: space-between;
    width: 565px;
    height: 136px;
    padding: 0 9px 0 13px;
    background-color: rgba(255, 255, 255, 0.6);
}
.mark-text {
    display: flex;
    flex-direction: column;
}
.mark-text strong {
    padding-left: 3px;
    font-family: "Noto Sans CJK SC", sans-serif;
    font-size: 59px;
    line-height: 74px;
    font-weight: 700;
    color: #ff2d2d;
}
.mark-text span {
    font-family: "Liberation Serif", serif;
    font-size: 45px;
    line-height: 64px;
    color: #2d80ff;
    -webkit-text-stroke: 1px #2d80ff;
}
.mark-tag b {
    width: 226px;
    border-radius: 34px;
    background-color: #2d80ff;
    font-family: "Noto Sans CJK SC", sans-serif;
    font-size: 108px;
    line-height: 116px;
    text-align: center;
    color: #fff;
}
.mark-site {
    position: absolute;
    left: 1354px;
    top: 985px;
    display: flex;
    opacity: 0.85;
}
.mark-site div {
    display: flex;
    flex-direction: column;
}
.mark-site strong {
    font-size: 21px;
    line-height: 26px;
    font-weight: 700;
    color: #3f84c4;
}
.mark-site span {
    font-family: "Liberation Sans", sans-serif;
    font-size: 17px;
    line-height: 18px;
    color: #4db84d;
}
```
FILE: sheet.js
```js
const widths = [20, 69, 89, 69, 69, 69, 69, 69, 69, 69, 76, 69, 69, 69, 69, 103, 166, 142, 69];
const letters = 'ABCDEFGHIJKLMNOPQR';

const rows = {
    16: ['14', '技术员', '13', '小D', '女', '36', '硕士', '四川省', '成都市', '78', '及格', '23', '200', '5,100', 'TRUE', '2023年10月26日'],
    17: ['15', '技术员', '14', '杨十四', '女', '33', '专科', '湖北省', '武汉市', '99', '优秀', '23', '200', '5,300', 'TRUE', '2023年10月27日'],
    18: ['16', '员工', '15', '小C', '男', '22', '硕士', '湖南省', '长沙市', '76', '及格', '23', '200', '5,000', 'FALSE', '2023年10月28日'],
    19: ['17', '技术员', '16', '李六', '女', '28', '硕士', '辽宁省', '沈阳市', '85', '良好', '23', '200', '8,000', 'TRUE', '2023年10月29日'],
    20: ['18', '技术员', '17', '小B', '男', '22', '专科', '江苏省', '南京市', '', '', '', '', '', 'FALSE', '2023年10月30日'],
    21: ['19', '员工', '18', '冯十', '男', '28', '专科', '四川省', '成都市', '', '', '', '', '', 'TRUE', '2023年10月31日'],
    22: ['20', '技术员', '19', '吴九', '女', '22', '硕士', '福建省', '厦门市', '', '', '', '', '', 'TRUE', '2023年11月1日'],
    23: ['21', '技术员', '20', '小红', '男', '26', '专科', '江苏省', '南京市', '', '', '', '', '', 'TRUE', '2023年11月2日'],
    24: ['22', '助工', '21', '孙七', '男', '30', '本科', '山东省', '青岛市', '', '', '', '', '', 'FALSE', '2023年11月3日'],
    25: ['23', '技术员', '22', '小李', '男', '22', '硕士', '山东省', '青岛市', '', '', '', '', '', 'TRUE', '2023年11月4日'],
    26: ['24', '工程师', '23', '小韦', '男', '36', '硕士', '福建省', '厦门市', '', '', '', '', '', 'TRUE', '2023年11月5日'],
    44: ['A01', '', '', '', '', '', '', '', '#REF!'],
    45: ['A02', '', '', '', '', '', '', '', '#REF!'],
    46: ['A03', '', '', '', '', '', '', '', '#REF!']
};

// one extra column takes the rest of the window
document.getElementById('cols').innerHTML = widths.map(w => `<col style="width:${w}px">`).join('') + '<col>';

document.getElementById('letters').innerHTML = '<th class="corner"></th>' +
    [...letters].map(c => `<th class="${c === 'G' ? 'on' : ''}">${c}</th>`).join('') + '<th></th>';

function cellClass(r, c, value) {
    if (c === 6 && r >= 27 && r < 45) return 'sel';
    if (c === 1 && r === 45) return 'tint';
    if (value === '#REF!') return 'err';
    return '';
}

const body = document.getElementById('cells');
for (let r = 16; r <= 46; r++) {
    const row = document.createElement('tr');
    const data = rows[r] || [];
    let html = `<th class="${r >= 27 && r <= 45 ? 'on' : ''}">${r}</th>`;
    for (let c = 0; c <= letters.length; c++) {
        const value = data[c] || '';
        html += `<td class="${cellClass(r, c, value)}">${value}</td>`;
    }
    row.innerHTML = html;
    body.appendChild(row);
}
```
